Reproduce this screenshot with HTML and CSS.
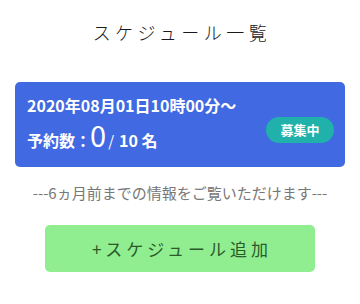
FILE: index.html
```html
<!DOCTYPE html>
<html lang="ja">
<head>
<meta charset="utf-8">
<link rel="stylesheet" href="styles.css">
</head>
<body>
<div class="page">
  <h1 class="title">スケジュール一覧</h1>
  <div class="card">
    <div class="card-info">
      <div class="card-date">2020年08月01日10時00分～</div>
      <div class="card-count">予約数：<span class="count-num">0</span><span class="count-slash">/</span>10 名</div>
    </div>
    <span class="badge">募集中</span>
  </div>
  <p class="notice">---6ヵ月前までの情報をご覧いただけます---</p>
  <div class="add-wrap">
    <button class="add-btn">+スケジュール追加</button>
  </div>
</div>
</body>
</html>
```

FILE: styles.css
```css
* { box-sizing: border-box; }
html, body { margin: 0; padding: 0; background: #fff; }
body {
  font-family: "Noto Sans CJK JP", "Noto Sans", sans-serif;
  color: #333;
}
.page {
  width: 360px;
  padding-top: 18px;
}
.title {
  margin: 0;
  text-align: center;
  font-size: 18px;
  font-weight: 300;
  letter-spacing: 4.5px;
  line-height: 28px;
  color: #1a1a1a;
  padding-left: 4px;
}
.card {
  margin: 36px 15px 0;
  height: 85px;
  background: #4169e1;
  border-radius: 5px;
  display: flex;
  align-items: center;
  justify-content: space-between;
  padding: 0 11px 0 12px;
  color: #fff;
}
.card-info {
  display: flex;
  flex-direction: column;
  gap: 4px;
}
.card-date {
  font-size: 16px;
  font-weight: 700;
  line-height: 22px;
}
.card-count {
  font-size: 16px;
  font-weight: 700;
  line-height: 28px;
  display: flex;
  align-items: baseline;
}
.count-num {
  font-size: 29px;
  font-weight: 400;
  margin: 0 2px 0 -1px;
}
.count-slash {
  font-size: 15px;
  font-weight: 400;
  margin-right: 5px;
}
.badge {
  margin-top: 11px;
  width: 68px;
  height: 26px;
  border-radius: 13px;
  background: #20b2aa;
  font-size: 13px;
  font-weight: 700;
  line-height: 26px;
  text-align: center;
}
.notice {
  margin: 15px 0 0;
  text-align: center;
  font-size: 15px;
  color: #777;
  line-height: 22px;
}
.add-wrap {
  display: flex;
  justify-content: center;
  margin-top: 21px;
}
.add-btn {
  width: 270px;
  height: 47px;
  border: none;
  border-radius: 5px;
  background: #90ee90;
  font-family: "Noto Sans CJK JP", "Noto Sans", sans-serif;
  font-size: 17px;
  font-weight: 400;
  letter-spacing: 4px;
  color: #2a5a2a;
  padding: 0 0 0 4px;
}
```
